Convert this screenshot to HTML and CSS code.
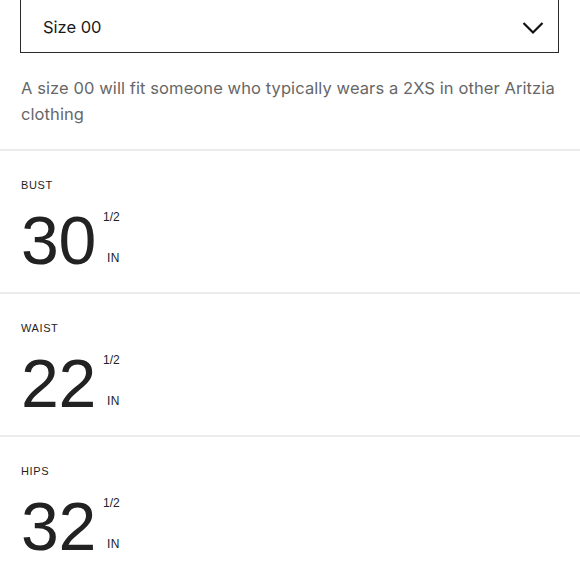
FILE: index.html
```html
<!DOCTYPE html>
<html lang="en">
<head>
<meta charset="utf-8">
<title>Size guide</title>
<link rel="stylesheet" href="styles.css">
</head>
<body>
<div class="page">
  <div class="select">
    <span class="select-label">Size 00</span>
    <svg class="chevron" width="22" height="14" viewBox="0 0 22 14" aria-hidden="true">
      <polyline points="1.5,2 11,11.5 20.5,2" fill="none" stroke="#111" stroke-width="2.2"/>
    </svg>
  </div>
  <p class="desc">A size 00 will fit someone who typically wears a 2XS in other Aritzia clothing</p>

  <section class="measure">
    <div class="label">BUST</div>
    <div class="value-row">
      <span class="value">30</span>
      <span class="suffix"><span class="frac">1/2</span><span class="unit">IN</span></span>
    </div>
  </section>

  <section class="measure">
    <div class="label">WAIST</div>
    <div class="value-row">
      <span class="value">22</span>
      <span class="suffix"><span class="frac">1/2</span><span class="unit">IN</span></span>
    </div>
  </section>

  <section class="measure">
    <div class="label">HIPS</div>
    <div class="value-row">
      <span class="value">32</span>
      <span class="suffix"><span class="frac">1/2</span><span class="unit">IN</span></span>
    </div>
  </section>
</div>
</body>
</html>
```

FILE: styles.css
```css
html, body {
  margin: 0;
  padding: 0;
  background: #fff;
}
body {
  font-family: "Inter", "Liberation Sans", sans-serif;
  color: #222;
  overflow: hidden;
}
.page {
  width: 580px;
}
.select {
  margin: -2px 21px 0 20px;
  height: 55px;
  box-sizing: border-box;
  border: 1.5px solid #2a2a2a;
  display: flex;
  align-items: center;
  justify-content: space-between;
  padding: 0 14px 0 22px;
}
.select-label {
  font-size: 16.5px;
  color: #1a1a1a;
  padding-top: 3px;
}
.chevron {
  display: block;
  margin-top: 4px;
}
.desc {
  margin: 22px 0 0;
  padding: 0 21px 22px;
  font-size: 16.5px;
  line-height: 26px;
  color: #676767;
  letter-spacing: 0.09px;
}
.measure {
  border-top: 2px solid #ebebeb;
  padding: 27px 21px 18px;
}
.label {
  font-family: "Liberation Sans", "Inter", sans-serif;
  font-size: 11px;
  line-height: 14px;
  letter-spacing: 0.6px;
  color: #1e1e1e;
}
.value-row {
  display: flex;
  margin-top: 14px;
  height: 68px;
}
.value {
  font-family: "Liberation Sans", sans-serif;
  font-size: 68px;
  line-height: 68px;
  color: #222;
  letter-spacing: -0.3px;
}
.suffix {
  display: flex;
  flex-direction: column;
  align-items: flex-end;
  justify-content: space-between;
  padding: 4px 0 9px 7px;
  font-family: "Liberation Sans", sans-serif;
  font-size: 12px;
  line-height: 14px;
  color: #222;
}
.unit {
  letter-spacing: 0.4px;
}
```
